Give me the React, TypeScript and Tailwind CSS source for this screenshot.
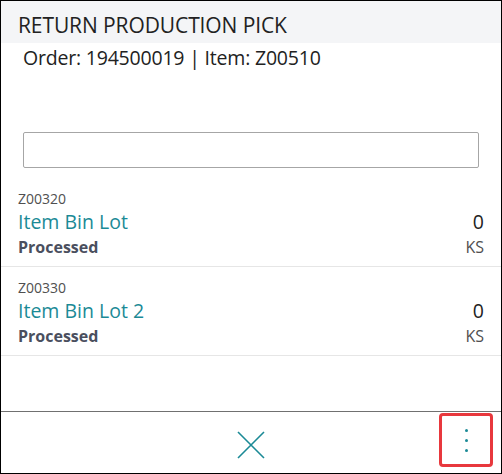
import React from "react";

const items = [
  { code: "Z00320", name: "Item Bin Lot", status: "Processed", qty: "0", unit: "KS" },
  { code: "Z00330", name: "Item Bin Lot 2", status: "Processed", qty: "0", unit: "KS" },
];

export default function App() {
  return (
    <div
      className="w-[502px] h-[474px] border border-black bg-white flex flex-col overflow-hidden"
      style={{ fontFamily: '"Open Sans", "Noto Sans", sans-serif' }}
    >
      <div className="h-[42px] shrink-0 bg-[#f4f5f7] pl-[17px] pt-[10px] text-[21px] leading-[28px] text-[#222222] tracking-[-0.1px]">
        RETURN PRODUCTION PICK
      </div>
      <div className="pl-[22px] mt-[2px] text-[19.5px] leading-[26px] text-[#222222] tracking-[-0.2px]">
        Order: 194500019 | Item: Z00510
      </div>
      <div className="px-[22px] mt-[61px]">
        <div className="h-[36px] border border-[#a6a6a6] rounded-[2px] bg-white" />
      </div>
      <div className="mt-[10px] flex flex-col">
        {items.map((it) => (
          <div key={it.code} className="border-b border-[#e6e6e6] px-[17px] pt-[12px] pb-[8px]">
            <div className="text-[14px] leading-[18px] text-[#505050]">{it.code}</div>
            <div className="mt-[2px] flex justify-between items-center text-[19.5px] leading-[24px]">
              <span className="text-[#1b8a96]">{it.name}</span>
              <span className="text-[#222222]">{it.qty}</span>
            </div>
            <div className="mt-[2px] flex justify-between items-center text-[16px] leading-[22px]">
              <span className="font-bold text-[#4a4f5e]">{it.status}</span>
              <span className="text-[#505050]">{it.unit}</span>
            </div>
          </div>
        ))}
      </div>
      <div className="flex-1" />
      <div className="h-[62px] shrink-0 border-t border-[#707070] relative flex items-center justify-center">
        <button className="w-[40px] h-[40px] flex items-center justify-center mt-[4px]">
          <svg width="28" height="28" viewBox="0 0 28 28">
            <path d="M1 1 L27 27 M27 1 L1 27" stroke="#1b8a96" strokeWidth="1.6" fill="none" />
          </svg>
        </button>
        <button className="absolute right-[8px] top-[1px] w-[54px] h-[54px] border-[3px] border-[#e8383d] rounded-[4px] flex flex-col items-center justify-center gap-[7px]">
          <span className="w-[3px] h-[3px] rounded-full bg-[#1b8a96]" />
          <span className="w-[3px] h-[3px] rounded-full bg-[#1b8a96]" />
          <span className="w-[3px] h-[3px] rounded-full bg-[#1b8a96]" />
        </button>
      </div>
    </div>
  );
}
